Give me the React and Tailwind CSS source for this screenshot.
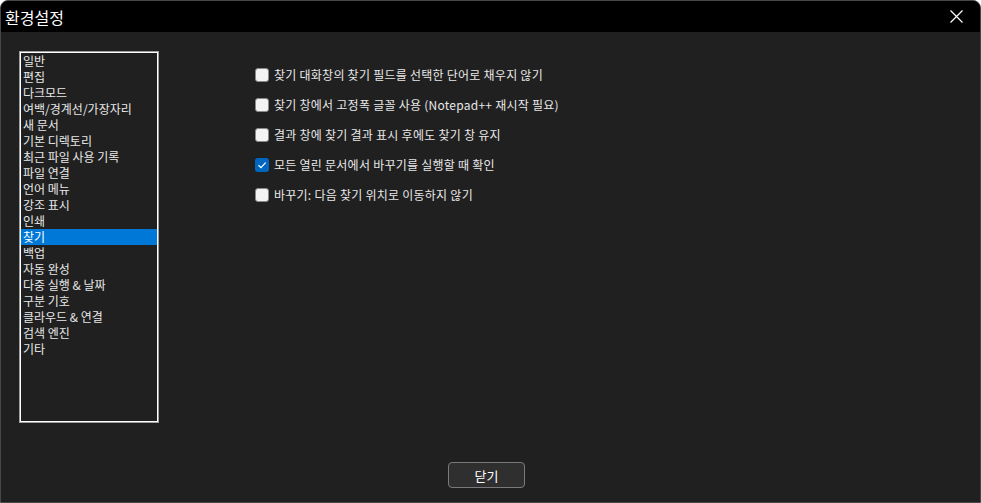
import React, { useState } from 'react';

const categories = [
  '일반', '편집', '다크모드', '여백/경계선/가장자리', '새 문서', '기본 디렉토리',
  '최근 파일 사용 기록', '파일 연결', '언어 메뉴', '강조 표시', '인쇄', '찾기',
  '백업', '자동 완성', '다중 실행 & 날짜', '구분 기호', '클라우드 & 연결',
  '검색 엔진', '기타',
];

const options = [
  { label: '찾기 대화창의 찾기 필드를 선택한 단어로 채우지 않기', checked: false },
  { label: '찾기 창에서 고정폭 글꼴 사용 (Notepad++ 재시작 필요)', checked: false },
  { label: '결과 창에 찾기 결과 표시 후에도 찾기 창 유지', checked: false },
  { label: '모든 열린 문서에서 바꾸기를 실행할 때 확인', checked: true },
  { label: '바꾸기: 다음 찾기 위치로 이동하지 않기', checked: false },
];

const font = "font-['Noto_Sans_CJK_KR','Noto_Sans',sans-serif]";

const App = () => {
  const [selected, setSelected] = useState('찾기');
  const [checks, setChecks] = useState(options.map((o) => o.checked));

  return (
    <div className={`w-[981px] h-[503px] bg-[#202020] border border-[#474747] rounded-t-lg overflow-hidden flex flex-col ${font}`}>
      {/* Title bar */}
      <div className="h-[31px] bg-black flex items-center justify-between shrink-0">
        <span className="pl-[4px] text-[16px] text-white leading-none">환경설정</span>
        <button className="w-[46px] h-[31px] flex items-center justify-center mr-[1px]">
          <svg width="13" height="13" viewBox="0 0 13 13" fill="none" stroke="#fff" strokeWidth="1.2">
            <path d="M0.5 0.5 L12.5 12.5 M12.5 0.5 L0.5 12.5" />
          </svg>
        </button>
      </div>

      {/* Body */}
      <div className="flex-1 flex pl-[18px] pt-[19px]">
        {/* Category list */}
        <div className="w-[140px] h-[372px] border border-[#a0a0a0] shrink-0">
          <div className="w-full h-full border border-white flex flex-col">
            {categories.map((c) => (
              <div
                key={c}
                onClick={() => setSelected(c)}
                className={`h-[16px] pl-[2px] text-[12px] leading-[16px] text-[#e8e8e8] whitespace-nowrap ${
                  selected === c ? 'bg-[#0078d7] text-white' : ''
                }`}
              >
                {c}
              </div>
            ))}
          </div>
        </div>

        {/* Options */}
        <div className="flex flex-col gap-[16px] pl-[96px] pt-[17px]">
          {options.map((o, i) => (
            <label key={o.label} className="flex items-center gap-[5px] h-[14px] cursor-default">
              <span
                onClick={() => setChecks(checks.map((v, j) => (j === i ? !v : v)))}
                className={`w-[14px] h-[14px] rounded-[3px] flex items-center justify-center shrink-0 ${
                  checks[i] ? 'bg-[#0067c0]' : 'bg-[#f3f3f3] border border-[#8a8a8a]'
                }`}
              >
                {checks[i] && (
                  <svg width="10" height="10" viewBox="0 0 10 10" fill="none" stroke="#fff" strokeWidth="1.2">
                    <path d="M1.5 5.2 L4 7.6 L8.6 2.6" />
                  </svg>
                )}
              </span>
              <span className="text-[12px] tracking-[0.25px] text-[#e8e8e8] whitespace-nowrap leading-none">{o.label}</span>
            </label>
          ))}
        </div>
      </div>

      {/* Footer */}
      <div className="h-[40px] flex justify-center items-start shrink-0">
        <button className="w-[77px] h-[26px] ml-[-8px] rounded-[4px] border border-[#7a7a7a] bg-[#2f2f2f] text-[13px] text-white leading-none">
          닫기
        </button>
      </div>
    </div>
  );
};

export default App;
